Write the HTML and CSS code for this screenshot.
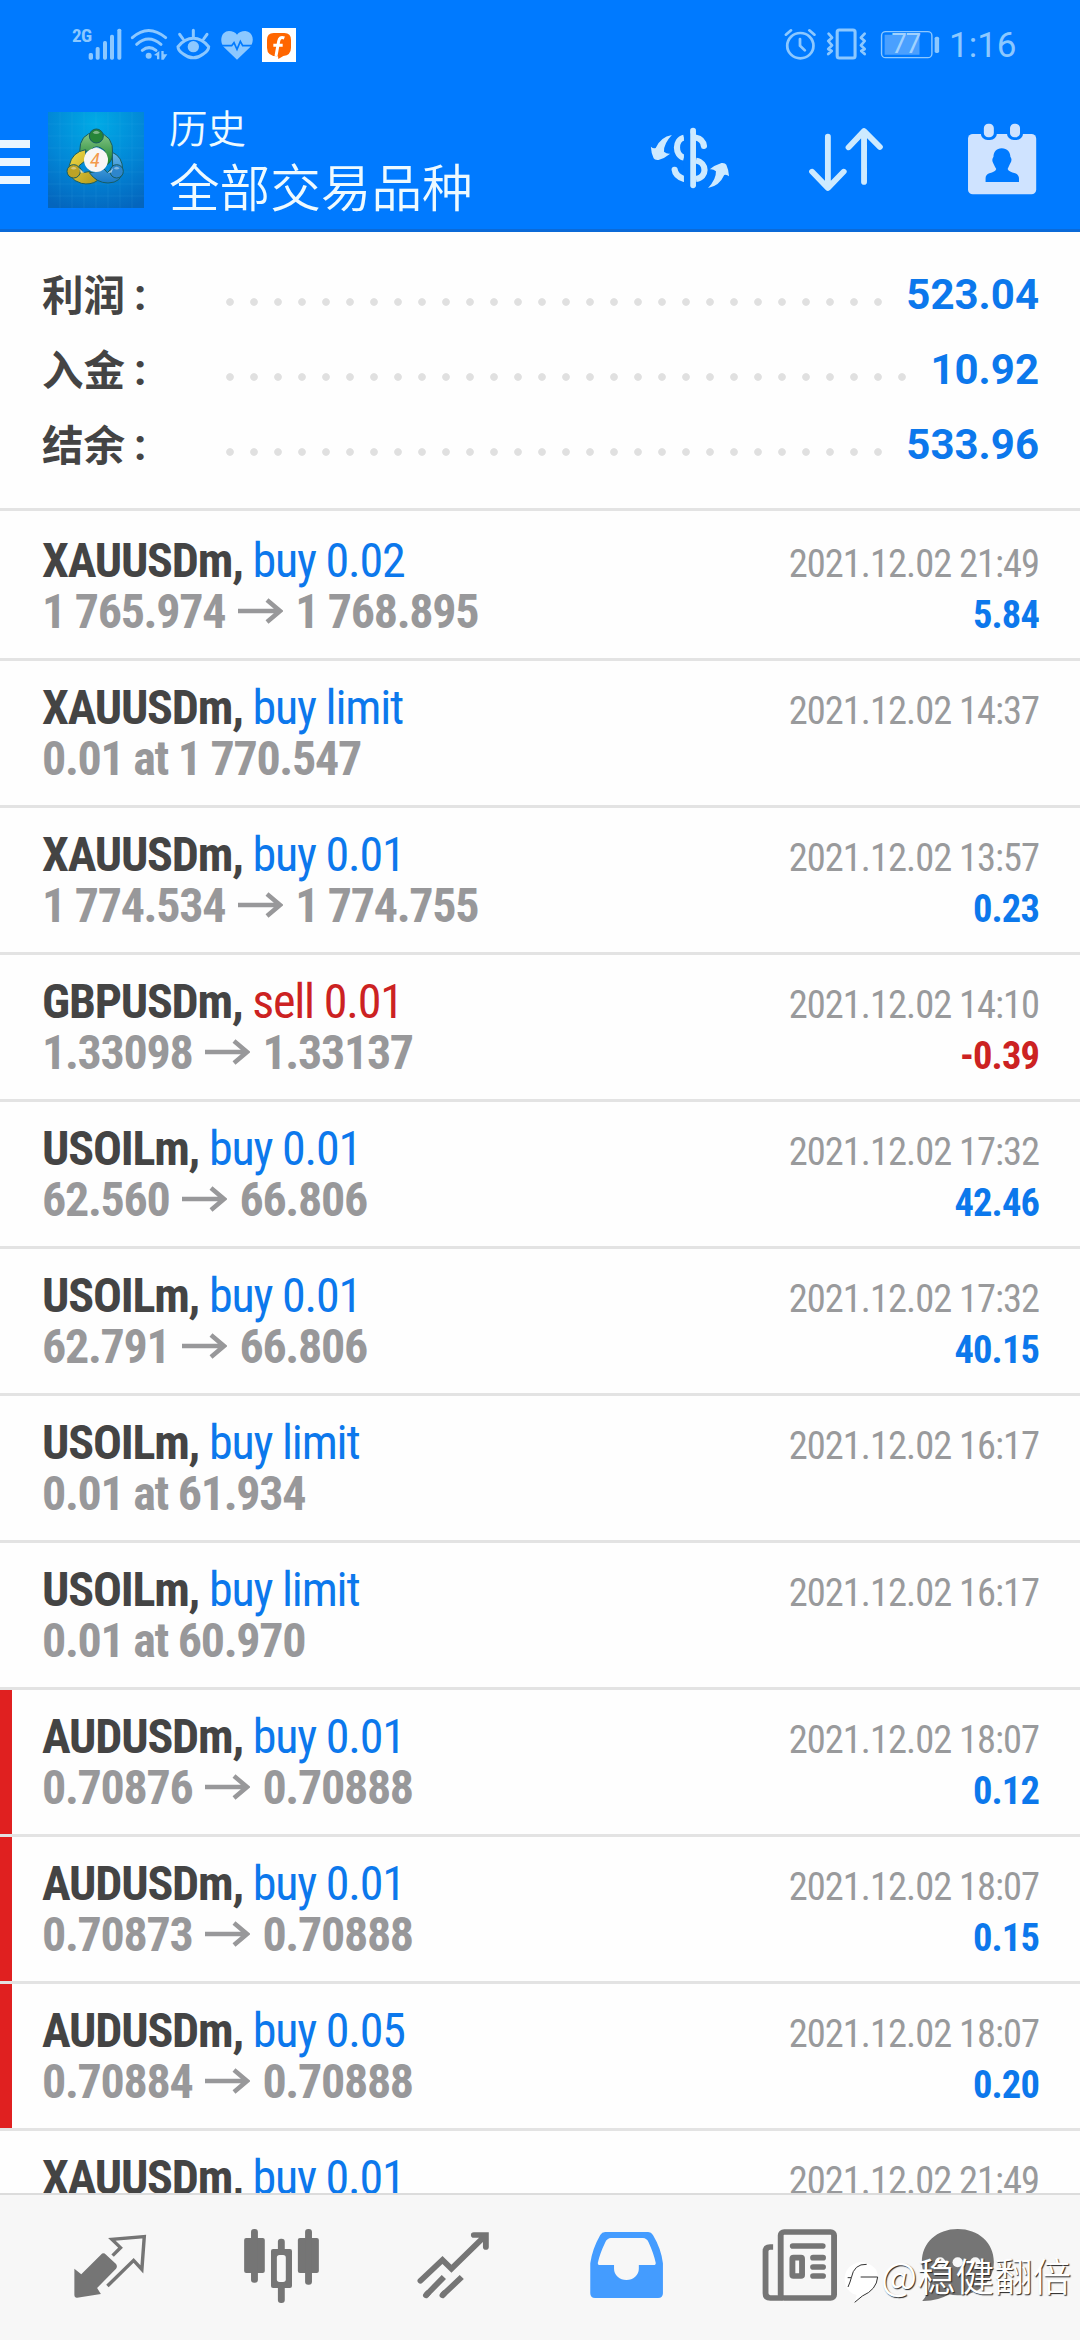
FILE: index.html
```html
<!DOCTYPE html>
<html lang="zh-CN">
<head>
<meta charset="utf-8">
<title>历史</title>
<link rel="stylesheet" href="styles.css">
</head>
<body>
<header class="header">
  <div class="status">
    <span class="net">2G</span>
    <svg class="st" width="40" viewBox="84 0 120 150" fill="currentColor"><rect x="86" y="99" width="13" height="20" rx="5"/><rect x="107" y="81" width="12" height="38" rx="5"/><rect x="129" y="63" width="12" height="56" rx="5"/><rect x="150" y="44" width="12" height="75" rx="5"/><rect x="172" y="26" width="12" height="93" rx="5"/></svg>
    <svg class="st" width="44" viewBox="204 0 132 150" fill="none" stroke="currentColor" stroke-width="9" stroke-linecap="round"><path d="M217 53Q265 10 317 53M230 73Q265 41 303 73M247 91Q267 75 288 91"/><circle cx="266" cy="107" r="9" fill="currentColor" stroke="none"/><path fill="currentColor" stroke="none" d="M282 105 298 93V118H291V107ZM304 93H311V103L322 103 311 119H304Z"/></svg>
    <svg class="st" width="44" viewBox="336 0 132 150" fill="none" stroke="currentColor" stroke-width="9" stroke-linecap="round"><path d="M354 80Q375 55 400 55T446 80Q446 92 430 102Q400 125 370 102Q354 92 354 80ZM400 31V52M359 43 369 57M441 43 431 57"/><circle cx="400" cy="80" r="17" fill="currentColor" stroke="none"/></svg>
    <svg class="st" width="45" viewBox="468 0 135 150"><path fill="currentColor" d="M531 119 492 82C478 65 482 34 507 33Q523 33 531 44Q539 33 556 33C580 35 585 64 570 82Z"/><path class="cut" d="M480 77H515L522 68 531 88 541 64 548 77H584"/></svg>
    <svg class="st" width="38" viewBox="603 0 114 150"><path fill="#fff" d="M606 24H708V126H606Z"/><path fill="#f60" d="M641 39H673Q693 39 693 60V83Q693 105 670 108L655 117 654 109Q621 109 621 83V60Q621 39 641 39Z"/><path fill="none" stroke="#fff" stroke-width="9" d="M673 54Q659 48 656 64L648 108M640 76H668"/></svg>
    <span class="spacer"></span>
    <svg class="st" width="40" viewBox="697 60 116 150" preserveAspectRatio="none" fill="none" stroke="currentColor" stroke-width="8" stroke-linecap="round"><circle cx="756" cy="137" r="38"/><path d="M714 104 729 91M797 104 782 91M755 117V137L769 151"/></svg>
    <svg class="st" width="55" viewBox="813 60 160 150" preserveAspectRatio="none" fill="none" stroke="currentColor" stroke-width="9" stroke-linecap="round" stroke-linejoin="round"><rect x="863" y="90" width="52" height="84" rx="6"/><path stroke-width="8" d="M838 101 848 113 837 123 848 136 837 147 847 153 837 162M943 101 932 113 943 123 932 136 943 147 933 153 943 162"/></svg>
    <svg class="st" width="70" viewBox="973 60 203 150" preserveAspectRatio="none"><rect x="992" y="95" width="146" height="78" rx="12" fill="none" stroke="currentColor" stroke-width="4"/><path class="charge" d="M1001 104H1102V164H1001Z"/><rect x="1146" y="110" width="13" height="49" rx="5" fill="currentColor"/><text class="pct" x="1020" y="158">77</text></svg>
    <span class="time">1:16</span>
  </div>
  <div class="bar">
    <span class="menu"><i></i><i></i><i></i></span>
    <svg class="app" width="96" height="96" viewBox="24 24 288 288">
      <defs>
        <radialGradient id="sky" cx=".5" cy=".12" r=".95"><stop offset="0" stop-color="#00abe6"/><stop offset=".55" stop-color="#0286d6"/><stop offset="1" stop-color="#0465bd"/></radialGradient>
        <linearGradient id="gr" x2="0" y2="1"><stop stop-color="#8bc98b"/><stop offset="1" stop-color="#16812a"/></linearGradient>
        <linearGradient id="ye" x2="1" y2="1"><stop stop-color="#f2dc46"/><stop offset="1" stop-color="#b0971c"/></linearGradient>
        <linearGradient id="bl" x2="0" y2="1"><stop stop-color="#6ab9ea"/><stop offset="1" stop-color="#1878c6"/></linearGradient>
      </defs>
      <path fill="url(#sky)" d="M24 24H312V312H24Z"/>
      <path stroke="#5fc4f0" stroke-opacity=".18" stroke-width="2" d="M60 24V312M96 24V312M132 24V312M168 24V312M204 24V312M240 24V312M276 24V312M24 60H312M24 96H312M24 132H312M24 168H312M24 204H312M24 240H312M24 276H312"/>
      <g stroke="#175c62" stroke-width="3">
        <path fill="url(#gr)" d="M119 143Q118 88 168 84Q222 92 218 150Q216 176 198 184L194 140Q168 116 150 141Z"/>
        <path fill="url(#ye)" d="M137 137Q96 144 88 184Q80 225 124 238Q152 244 172 230L150 202 130 206 116 186 136 170Z"/>
        <path fill="url(#bl)" d="M217 145Q248 158 248 198Q246 236 204 237Q170 237 148 206Q176 204 186 188L202 206 218 190Z"/>
        <circle cx="169" cy="96" r="21" fill="#268538"/><circle cx="101" cy="202" r="20" fill="#bda326"/><circle cx="230" cy="202" r="20" fill="#2e86cc"/>
      </g>
      <path fill="#fff" fill-opacity=".4" d="M158 86Q168 74 180 86Q168 94 158 86ZM92 193Q101 183 110 193Q101 200 92 193ZM221 193Q230 183 239 193Q230 200 221 193Z"/>
      <path fill="#fff" fill-opacity=".55" d="M134 206 116 192 122 206ZM204 206 220 192 214 206ZM158 134Q168 124 182 134Z"/>
      <circle cx="168" cy="168" r="36" fill="#f8f6f6"/>
      <text class="four" x="150" y="190">4</text>
    </svg>
    <div class="titles"><div class="t1">历史</div><div class="t2">全部交易品种</div></div>
    <div class="actions">
      <svg width="100" height="96" viewBox="290.4 336 290.4 288" preserveAspectRatio="none" fill="none" stroke="currentColor" stroke-width="18">
        <path stroke-width="17" stroke-linecap="round" d="M444.500 392V556"/>
        <path d="M418 413C391 419 391 466 418 473M453 482C486 488 486 532 453 537"/>
        <path stroke-linecap="round" d="M453 413Q473 417 476 438"/><path stroke-linecap="round" d="M391 509Q393 528 418 537"/>
        <path fill="#007aff" stroke="none" d="M418 400H436V560H418Z"/>
        <g id="swing" fill="currentColor" stroke="none"><path d="M322 440Q329 447 336 444Q350 411 383 405Q359 431 360 455Q369 463 378 461Q363 474 344 480Q333 481 330 475Q323 460 322 440Z"/></g>
        <use href="#swing" transform="rotate(180 435.500 484.500)"/>
      </svg>
      <svg width="100" height="96" viewBox="746.3 336 290.4 288" preserveAspectRatio="none" fill="none" stroke="currentColor" stroke-width="17" stroke-linecap="round" stroke-linejoin="round"><path d="M836 410V562M790 515 836 564 882 515M941 546V394M896 442 941 393 987 441"/></svg>
      <svg class="cal" width="100" height="96" viewBox="1199.4 336 290.4 288" preserveAspectRatio="none"><rect x="1243" y="402" width="198" height="181" rx="14" fill="currentColor"/><g fill="#007aff"><rect x="1280" y="364" width="47" height="56" rx="20"/><rect x="1356" y="364" width="47" height="56" rx="20"/><path d="M1341 445C1357 445 1366 457 1366 470Q1373 480 1365 491Q1361 500 1358 507Q1362 516 1380 520Q1391 524 1391 535V546H1294V535Q1294 524 1305 520Q1322 516 1325 507Q1321 500 1317 491Q1310 480 1317 470C1317 457 1325 445 1341 445Z"/></g><g fill="currentColor"><rect x="1289" y="371" width="29" height="41" rx="13"/><rect x="1365" y="371" width="29" height="41" rx="13"/></g></svg>
    </div>
  </div>
</header>

<section class="summary">
  <div class="sum"><span class="label">利润</span><span class="colon">:</span><span class="dots"></span><b>523.04</b></div>
  <div class="sum"><span class="label">入金</span><span class="colon">:</span><span class="dots"></span><b>10.92</b></div>
  <div class="sum"><span class="label">结余</span><span class="colon">:</span><span class="dots"></span><b>533.96</b></div>
</section>

<svg class="defs"><symbol id="arrow" viewBox="0 0 45 26"><path fill="none" stroke="currentColor" stroke-width="4.500" d="M0 13H42M29 2 42 13 29 24"/></symbol></svg>

<main class="list">
  <div class="row"><div class="line"><span><b>XAUUSDm,</b> <em>buy 0.02</em></span><time>2021.12.02 21:49</time></div><div class="line"><span class="price">1 765.974<svg><use href="#arrow"/></svg>1 768.895</span><strong>5.84</strong></div></div>
  <div class="row"><div class="line"><span><b>XAUUSDm,</b> <em>buy limit</em></span><time>2021.12.02 14:37</time></div><div class="line"><span class="price">0.01 at 1 770.547</span></div></div>
  <div class="row"><div class="line"><span><b>XAUUSDm,</b> <em>buy 0.01</em></span><time>2021.12.02 13:57</time></div><div class="line"><span class="price">1 774.534<svg><use href="#arrow"/></svg>1 774.755</span><strong>0.23</strong></div></div>
  <div class="row"><div class="line"><span><b>GBPUSDm,</b> <em class="red">sell 0.01</em></span><time>2021.12.02 14:10</time></div><div class="line"><span class="price">1.33098<svg><use href="#arrow"/></svg>1.33137</span><strong class="red">-0.39</strong></div></div>
  <div class="row"><div class="line"><span><b>USOILm,</b> <em>buy 0.01</em></span><time>2021.12.02 17:32</time></div><div class="line"><span class="price">62.560<svg><use href="#arrow"/></svg>66.806</span><strong>42.46</strong></div></div>
  <div class="row"><div class="line"><span><b>USOILm,</b> <em>buy 0.01</em></span><time>2021.12.02 17:32</time></div><div class="line"><span class="price">62.791<svg><use href="#arrow"/></svg>66.806</span><strong>40.15</strong></div></div>
  <div class="row"><div class="line"><span><b>USOILm,</b> <em>buy limit</em></span><time>2021.12.02 16:17</time></div><div class="line"><span class="price">0.01 at 61.934</span></div></div>
  <div class="row"><div class="line"><span><b>USOILm,</b> <em>buy limit</em></span><time>2021.12.02 16:17</time></div><div class="line"><span class="price">0.01 at 60.970</span></div></div>
  <div class="row stop"><div class="line"><span><b>AUDUSDm,</b> <em>buy 0.01</em></span><time>2021.12.02 18:07</time></div><div class="line"><span class="price">0.70876<svg><use href="#arrow"/></svg>0.70888</span><strong>0.12</strong></div></div>
  <div class="row stop"><div class="line"><span><b>AUDUSDm,</b> <em>buy 0.01</em></span><time>2021.12.02 18:07</time></div><div class="line"><span class="price">0.70873<svg><use href="#arrow"/></svg>0.70888</span><strong>0.15</strong></div></div>
  <div class="row stop"><div class="line"><span><b>AUDUSDm,</b> <em>buy 0.05</em></span><time>2021.12.02 18:07</time></div><div class="line"><span class="price">0.70884<svg><use href="#arrow"/></svg>0.70888</span><strong>0.20</strong></div></div>
  <div class="row"><div class="line"><span><b>XAUUSDm,</b> <em>buy 0.01</em></span><time>2021.12.02 21:49</time></div></div>
</main>

<nav class="tabs">
  <svg viewBox="69.7 165 499.5 435" preserveAspectRatio="none"><path fill="currentColor" d="M216 386 236 403 293 344Q300 336 308 344L337 372Q342 380 337 386L282 444 293 462 224 473Q216 474 216 466Z"/><path fill="none" stroke="currentColor" stroke-width="10" d="M327 347 350 323 325 298 419 290 412 388 388 361 312 438"/></svg>
  <svg viewBox="569.2 165 499.5 435" preserveAspectRatio="none" fill="currentColor"><rect x="709" y="294" width="60" height="105" rx="6"/><rect x="729" y="267" width="20" height="161" rx="9"/><rect x="865" y="294" width="61" height="105" rx="6"/><rect x="886" y="267" width="20" height="167" rx="9"/><rect x="807" y="296" width="20" height="193" rx="9"/><rect x="787" y="327" width="61" height="117" rx="6"/><rect x="804" y="345" width="26" height="81" rx="8" fill="#f7f7f7"/></svg>
  <svg viewBox="1068.7 165 499.500 435" preserveAspectRatio="none" fill="none" stroke="currentColor" stroke-width="17"><path stroke-linecap="round" d="M1221 422 1285 360 1311 386 1409 287M1376 285H1411V321M1237 466 1242 460M1285 466 1290 460"/><path d="M1237 466 1289 411M1285 466 1341 411"/></svg>
  <svg class="on" viewBox="0 165 499.500 435" preserveAspectRatio="none"><path fill="currentColor" d="M189 276H314Q323 276 328 285Q352 326 357 370V460Q357 474 343 474H160Q146 474 146 460V370Q152 326 175 285Q180 276 189 276Z"/><path fill="#f7f7f7" d="M206 294H299Q310 295 315 306Q330 340 336 368Q337 375 330 375H287V386A36 34 0 0 1 215 386V375H174Q167 375 168 368Q174 340 190 306Q195 295 206 294Z"/></svg>
  <svg viewBox="499.500 165 499.500 435" preserveAspectRatio="none"><g fill="none" stroke="currentColor" stroke-width="17"><rect x="699" y="276" width="155" height="198" rx="10"/><path d="M677 321H668Q655 321 655 334V460Q655 474 669 474H705"/><rect x="733" y="353" width="28" height="55" rx="3"/><path stroke-linecap="round" d="M734 318H821M793 353H822M793 381H822M793 408H822"/></g></svg>
  <svg viewBox="999 165 499.500 435" preserveAspectRatio="none"><path fill="currentColor" d="M1213 267C1273 267 1318 308 1318 366S1273 466 1213 466Q1198 466 1188 463Q1155 484 1110 483Q1128 463 1133 430Q1109 405 1109 366C1109 308 1153 267 1213 267Z"/><g fill="#f7f7f7"><circle cx="1162" cy="367" r="15"/><circle cx="1213" cy="367" r="15"/><circle cx="1264" cy="367" r="15"/></g></svg>
</nav>

<div class="mark">
  <svg width="40" height="50" viewBox="30 115 120 150"><g><path fill="#fff" d="M68 135Q88 120 117 133Q146 146 143 174Q140 208 97 231L74 248 80 226Q42 216 44 172Q48 145 68 135Z"/><path fill="none" stroke="#333" stroke-width="3" d="M54 202Q61 186 64 174H53M64 174Q72 132 110 134M92 172H143Q140 210 97 229L74 248"/></g></svg>
  <span>@稳健翻倍</span>
</div>
</body>
</html>
```
FILE: styles.css
```css
* { box-sizing: border-box; }
body {
  margin: 0; width: 1080px; height: 2340px; overflow: hidden; position: relative;
  display: flex; flex-direction: column; background: #fefefe;
  font-family: "Roboto Condensed", Roboto, "Noto Sans CJK SC", sans-serif;
}
svg { display: block; flex: none; }
.defs { width: 0; height: 0; position: absolute; }

.header { flex: none; height: 232px; background: #007aff; border-bottom: 3px solid #0b6ad8; }
.status { display: flex; align-items: flex-start; height: 92px; padding: 20px 0 0 72px; color: #8cc8ff; }
.st { height: 50px; }
.net { width: 16px; font-size: 19px; font-weight: 700; line-height: 22px; padding-top: 5px; letter-spacing: -.5px; }
.cut { fill: none; stroke: #007aff; stroke-width: 5; }
.spacer { flex: 1; }
.charge { fill: #4aa0ff; }
.pct { font: 400 81px Roboto, sans-serif; fill: #a0d2ff; letter-spacing: -4px; }
.time { width: 135px; padding: 5px 0 0 4px; font: 400 35px/41px Roboto, sans-serif; }

.bar { display: flex; align-items: flex-start; padding-top: 20px; }
.menu { width: 48px; padding-top: 28px; display: grid; gap: 10px; }
.menu i { width: 30px; height: 8px; background: #eaf6ff; }
.titles { margin-left: 25px; color: #eefaff; font-family: "Noto Sans CJK SC", sans-serif; font-weight: 350; white-space: nowrap; }
.t1 { font-size: 38.500px; line-height: 40px; margin-top: -6px; }
.t2 { font-size: 50.600px; line-height: 60px; margin-top: 9px; }
.four { font: italic 400 62px "Roboto Condensed", sans-serif; fill: #f39a4d; }
.actions { display: flex; gap: 56.500px; margin-left: auto; padding-right: 27px; color: #cdeaff; }
.cal { color: #cfe3ff; }

.summary { flex: none; height: 279px; padding: 25px 41px 0 42px; border-bottom: 3px solid #e3e3e3; }
.sum { display: flex; height: 75px; align-items: center; }
.label { width: 84px; margin-top: -3px; font: 700 41.500px/60px "Noto Sans CJK SC", sans-serif; color: #444; }
.colon { width: 79px; padding-left: 8px; font: 700 44px/60px Roboto, sans-serif; color: #444; }
.dots { flex: 1; height: 8px; margin: 15px 0 0 13px; background: radial-gradient(circle at 12px 4px, #e0e0e0 3.400px, transparent 4.200px) 0 0 / 24px 8px repeat-x; }
.sum b { padding-left: 12px; font: 700 42px/60px Roboto, sans-serif; color: #0c78ec; }

.list { flex: 1; min-height: 0; overflow: hidden; }
.row { height: 147px; padding: 21px 42px 0; border-bottom: 3px solid #e3e3e3; font-size: 48px; line-height: 51px; letter-spacing: -1.200px; }
.row:first-child { height: 150px; padding-top: 24px; }
.stop { background: linear-gradient(90deg, #e02020 12px, transparent 12px) padding-box; }
.line { display: flex; justify-content: space-between; align-items: baseline; height: 50.500px; white-space: nowrap; }
.line b { color: #444; font-weight: 700; }
.line em { color: #0c78ec; font-style: normal; }
.line time { font-size: 38.500px; color: #999a9c; letter-spacing: -1px; margin-right: -1px; }
.line strong { font-size: 38.500px; color: #0c78ec; letter-spacing: -.9px; margin-right: -1px; }
.line .red { color: #cc2222; }
.price { color: #98989a; font-weight: 700; letter-spacing: -1.300px; }
.price svg { display: inline-block; width: 45px; height: 26px; margin: 0 12px 0 13px; vertical-align: 4px; }

.tabs { flex: none; height: 147px; display: grid; grid-template-columns: repeat(6, 172px); padding: 0 24px; background: #f7f7f7; border-top: 2px solid #dcdcdc; color: #757575; }
.tabs svg { width: 172px; height: 145px; }
.tabs .on { color: #449cff; }

.mark { position: absolute; left: 840px; top: 2258px; display: flex; align-items: flex-start; color: #fff; }
.mark span { margin-top: -10px; margin-left: 1px; font: 350 38.500px/52px "Noto Sans CJK SC", sans-serif; text-shadow: 1px 1px 1px #222; white-space: nowrap; }
```
